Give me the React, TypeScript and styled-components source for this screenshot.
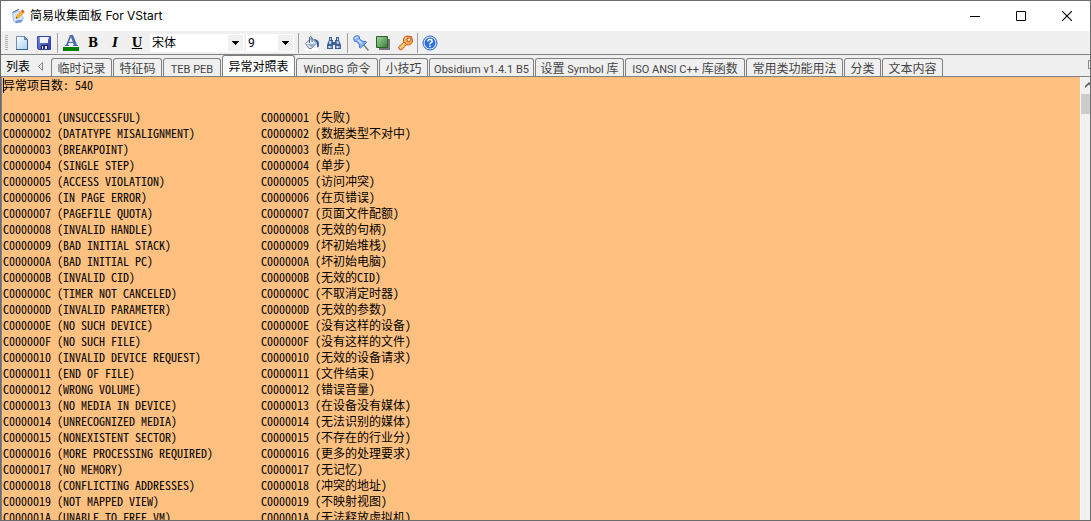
import React from 'react';
import styled, { createGlobalStyle } from 'styled-components';

const GlobalStyle = createGlobalStyle`
  * { box-sizing: border-box; }
  body { margin: 0; }
  button, select, textarea { font: inherit; color: inherit; border-radius: 0; }
`;

const Window = styled.div`
  display: flex;
  flex-direction: column;
  height: 100vh;
  border: 1px solid #6b6b6b;
  background: #f0f0f0;
  color: #000;
  font: 12px/16px Roboto, 'Noto Sans CJK SC', sans-serif;
  overflow: hidden;
`;

const TitleBar = styled.header`
  display: flex;
  align-items: center;
  flex: none;
  height: 30px;
  padding-left: 9px;
  background: #fff;
`;

const Title = styled.h1`
  flex: 1;
  margin: 0;
  padding-left: 4px;
  font: 12px/16px Inter, 'Noto Sans CJK SC', sans-serif;
`;

const CaptionButton = styled.button`
  display: flex;
  align-items: center;
  justify-content: center;
  width: 46px;
  height: 30px;
  padding: 0;
  border: 0;
  background: none;
`;

const Toolbar = styled.div`
  display: flex;
  align-items: center;
  flex: none;
  height: 24px;
  padding-left: 2px;
  border-bottom: 1px solid #808080;
`;

const Grip = styled.span`
  width: 3px;
  height: 16px;
  margin: 0 3px 0 2px;
  background: repeating-linear-gradient(#b0b0b0 0 1px, #f0f0f0 1px 2px);
`;

const ToolButton = styled.button`
  display: flex;
  align-items: center;
  justify-content: center;
  flex: none;
  width: 22px;
  height: 22px;
  padding: 0;
  border: 0;
  background: none;
`;

const Letter = styled(ToolButton)<{ $italic?: boolean; $underline?: boolean }>`
  font: bold 12px/16px 'DejaVu Serif', serif;
  font-style: ${(p) => (p.$italic ? 'italic' : 'normal')};
  text-decoration: ${(p) => (p.$underline ? 'underline' : 'none')};
`;

const Separator = styled.span<{ $margin?: number }>`
  flex: none;
  width: 1px;
  height: 20px;
  margin: 0 ${(p) => p.$margin ?? 2}px;
  background: #a0a0a0;
`;

const Pickers = styled.div`
  display: flex;
  gap: 2px;
  padding: 0 2px;
`;

const Picker = styled.label<{ $width: number }>`
  display: grid;
  grid-template-columns: 1fr 16px;
  align-items: center;
  flex: none;
  width: ${(p) => p.$width}px;
  height: 18px;
  background: #fff;

  select {
    grid-area: 1 / 1 / 2 / 3;
    width: 100%;
    height: 18px;
    padding: 0 0 0 2px;
    border: 0;
    appearance: none;
    background: none;
  }
  svg {
    grid-area: 1 / 2;
    width: 15px;
    height: 16px;
    background: #f0f0f0;
    pointer-events: none;
  }
`;

const TabRow = styled.nav`
  display: flex;
  align-items: flex-end;
  flex: none;
  height: 22px;
  border-bottom: 1px solid #808080;
`;

const ListLabel = styled.button`
  width: 35px;
  height: 19px;
  padding: 0 0 0 5px;
  border: 0;
  background: none;
  text-align: left;
`;

const Scroller = styled.button`
  display: flex;
  align-items: center;
  justify-content: center;
  width: 10px;
  height: 20px;
  margin-right: 5px;
  padding: 0;
  border: 0;
  background: none;
`;

const Tab = styled.button<{ $width: number; $active?: boolean }>`
  flex: none;
  width: ${(p) => p.$width}px;
  height: ${(p) => (p.$active ? 21 : 18)}px;
  margin-right: 1px;
  padding: ${(p) => (p.$active ? 1 : 2)}px 0 0;
  border: 1px solid #808080;
  border-bottom: 0;
  border-radius: 3px 3px 0 0;
  background: ${(p) => (p.$active ? '#fff' : '#f0f0f0')};
  color: ${(p) => (p.$active ? '#000' : '#444')};
  line-height: 16px;
  white-space: nowrap;
`;

const Latin = styled.span`
  font-size: 11px;
`;

const TabEnd = styled.span`
  flex: 1;
  display: flex;
  justify-content: flex-end;
  align-self: flex-start;
  padding-top: 5px;
`;

const Body = styled.main`
  display: flex;
  flex: 1;
  min-height: 0;
  border-left: 1px solid #808080;
  position: relative;
`;

const Editor = styled.textarea`
  flex: 1;
  min-width: 0;
  margin: 0;
  padding: 0 0 0 1px;
  border: 0;
  outline: 0;
  resize: none;
  overflow: hidden;
  white-space: pre;
  background: #ffc080;
  font: 12px/16px 'Noto Sans CJK SC', monospace;
  font-feature-settings: 'hwid' 1;
`;

const Caret = styled.span`
  position: absolute;
  left: 1px;
  top: 1px;
  width: 1px;
  height: 15px;
  background: #000;
`;

const ScrollTrack = styled.div`
  display: flex;
  flex-direction: column;
  width: 10px;
  border-left: 1px solid #fff;
  background: #f0f0f0;
  overflow: hidden;

  svg { flex: none; height: 17px; }
`;

const ScrollThumb = styled.span`
  height: 20px;
  background: #cdcdcd;
`;

const tabs: [string, number][] = [
  ['临时记录', 61],
  ['特征码', 49],
  ['TEB PEB', 58],
  ['异常对照表', 73],
  ['WinDBG 命令', 82],
  ['小技巧', 49],
  ['Obsidium v1.4.1 B5', 105],
  ['设置 Symbol 库', 89],
  ['ISO ANSI C++ 库函数', 120],
  ['常用类功能用法', 97],
  ['分类', 37],
  ['文本内容', 61],
];

const codes: [string, string, string][] = [
  ['C0000001', 'UNSUCCESSFUL', '失败'],
  ['C0000002', 'DATATYPE MISALIGNMENT', '数据类型不对中'],
  ['C0000003', 'BREAKPOINT', '断点'],
  ['C0000004', 'SINGLE STEP', '单步'],
  ['C0000005', 'ACCESS VIOLATION', '访问冲突'],
  ['C0000006', 'IN PAGE ERROR', '在页错误'],
  ['C0000007', 'PAGEFILE QUOTA', '页面文件配额'],
  ['C0000008', 'INVALID HANDLE', '无效的句柄'],
  ['C0000009', 'BAD INITIAL STACK', '坏初始堆栈'],
  ['C000000A', 'BAD INITIAL PC', '坏初始电脑'],
  ['C000000B', 'INVALID CID', '无效的CID'],
  ['C000000C', 'TIMER NOT CANCELED', '不取消定时器'],
  ['C000000D', 'INVALID PARAMETER', '无效的参数'],
  ['C000000E', 'NO SUCH DEVICE', '没有这样的设备'],
  ['C000000F', 'NO SUCH FILE', '没有这样的文件'],
  ['C0000010', 'INVALID DEVICE REQUEST', '无效的设备请求'],
  ['C0000011', 'END OF FILE', '文件结束'],
  ['C0000012', 'WRONG VOLUME', '错误音量'],
  ['C0000013', 'NO MEDIA IN DEVICE', '在设备没有媒体'],
  ['C0000014', 'UNRECOGNIZED MEDIA', '无法识别的媒体'],
  ['C0000015', 'NONEXISTENT SECTOR', '不存在的行业分'],
  ['C0000016', 'MORE PROCESSING REQUIRED', '更多的处理要求'],
  ['C0000017', 'NO MEMORY', '无记忆'],
  ['C0000018', 'CONFLICTING ADDRESSES', '冲突的地址'],
  ['C0000019', 'NOT MAPPED VIEW', '不映射视图'],
  ['C000001A', 'UNABLE TO FREE VM', '无法释放虚拟机'],
];

const text =
  '异常项目数: 540\n\n' +
  codes.map(([code, name, zh]) => `${code} (${name})`.padEnd(43) + `${code} (${zh})`).join('\n');

const TabLabel = ({ label }: { label: string }) => (
  <>
    {label.split(/([ -~]+)/).map((part, i) => (i % 2 ? <Latin key={i}>{part}</Latin> : part))}
  </>
);

const Icon = ({ children, size = 16 }: { children: React.ReactNode; size?: number }) => (
  <svg width={size} height={size} viewBox="0 0 16 16" aria-hidden="true">
    {children}
  </svg>
);

const Arrow = () => (
  <svg viewBox="0 0 15 16" aria-hidden="true">
    <path d="M4 6h7v1h-1v1H9v1H8v1H7V9H6V8H5V7H4z" fill="#000" />
  </svg>
);

const NotepadIcon = () => (
  <Icon>
    <path d="M2.500 5 9 3l4.500 7-2 4-5.500 1-2.500-2z" fill="#d5e6fb" stroke="#a5c0ee" />
    <path d="M5 13 12 11.500l-.5 2.500-5 1z" fill="#6f8fe0" />
    <path d="M2.500 5 4 3l1 1 1-2 1 1 1-2 1 1" fill="none" stroke="#5478c8" />
    <path d="m6 10.500 1-3 5-5 2 2-5 5z" fill="#ffb52c" stroke="#e58a19" strokeWidth=".7" />
    <path d="m11 3 1.500-1.500 2 2L13 5z" fill="#e2503c" />
    <path d="m6 10.500.6-1.600 1 1z" fill="#333" />
  </Icon>
);

const NewIcon = () => (
  <Icon>
    <defs>
      <linearGradient id="page" x1="0" y1="0" x2="1" y2="1">
        <stop offset="0" stopColor="#fff" />
        <stop offset="1" stopColor="#a9cff8" />
      </linearGradient>
    </defs>
    <path d="M2.500 1.500h8l3 3v10h-11z" fill="url(#page)" stroke="#6f8fbd" />
    <path d="M2 14.500h12M13.500 5v10" stroke="#3d5f96" />
    <path d="M10.500 1.500v3h3z" fill="#6fa4e8" stroke="#5b80b8" />
  </Icon>
);

const SaveIcon = () => (
  <Icon>
    <defs>
      <linearGradient id="disk" x1="0" y1="0" x2="1" y2="1">
        <stop offset="0" stopColor="#7e95f0" />
        <stop offset="1" stopColor="#2637a0" />
      </linearGradient>
    </defs>
    <path d="M1.500 1.500h13v13h-12l-1-1z" fill="url(#disk)" stroke="#3444a4" />
    <path d="M4 2h8v6H4z" fill="#f2f5ff" />
    <path d="M12 2h1v2h-1z" fill="#c5d0ff" />
    <path d="M5 10h7v4H5z" fill="#1b2454" />
    <path d="M6 11h5v3H6z" fill="#dfe3ee" />
    <path d="M7 11h2v3H7z" fill="#27306b" />
  </Icon>
);

const ColorIcon = () => (
  <Icon>
    <path d="M7 0h3l4 10h1v1h-5v-1h1L10 8H5.500L5 10h1v1H2v-1h1zM8 2 6 7h3.800z" fill="#4a6ab0" fillRule="evenodd" />
    <path d="M0 12h16v4H0z" fill="#008000" />
  </Icon>
);

const BucketIcon = () => (
  <Icon>
    <path d="M1 13h13v3H1z" fill="#fff" />
    <path d="m1.500 8.500 6-5.500 5 5-5 5.500H5z" fill="#e9eff8" stroke="#6a7c98" />
    <path d="m3 9 5 4 4-4.500z" fill="#9aaed0" />
    <path d="M5.500 8V2.500q1-2 2.500 0V7" fill="none" stroke="#44577c" />
    <path d="M9 4q6 0 6 5 0 4-2 3V8q-1-2-4-4z" fill="#315eae" />
  </Icon>
);

const BinocularsIcon = () => (
  <Icon>
    <path d="M3 2h3v3h1v2h2V5h1V2h3v3l2 5v4H9v-4H7v4H1v-4l2-5z" fill="#3e5f91" />
    <path d="M4 3h1v2H4zM11 3h1v2h-1zM3.500 6h2l-.5 3H3zM10.500 6h2l.5 3h-2z" fill="#bcd2ee" />
    <path d="M2 11h4v2H2zM10 11h4v2h-4z" fill="#87a9d7" />
    <path d="M3 11h1v2H3zM11 11h1v2h-1z" fill="#eef5ff" />
  </Icon>
);

const PinIcon = () => (
  <Icon>
    <path d="m10 9 5.500 6.500" stroke="#6f7c91" strokeWidth="1.500" />
    <path d="M.5 3.500Q1 .5 5 .5l1.500 1.500v2L10 6.500h3l.5 1-6 5.500-1-.5V10L3.500 6.500H1.500z" fill="#82adf7" stroke="#4a78d8" />
    <path d="M2 3.500 4.500 2M5 5l4 3.500" stroke="#d4e4ff" strokeWidth="1.500" />
  </Icon>
);

const SquareIcon = () => (
  <Icon>
    <defs>
      <linearGradient id="green" x1="0" y1="0" x2="1" y2="1">
        <stop offset="0" stopColor="#a5d6a0" />
        <stop offset="1" stopColor="#358036" />
      </linearGradient>
    </defs>
    <path d="M4 4h11v11H4z" fill="#74757c" />
    <path d="M1.500 1.500h11v11h-11z" fill="url(#green)" stroke="#2b602c" />
  </Icon>
);

const WrenchIcon = () => (
  <Icon>
    <path d="m1.500 12 5.500-5 2.500 2.500-5 5.500q-2.500.5-3-3z" fill="#ffbd54" stroke="#c85824" />
    <path d="M6.500 6.500Q6 1.500 10 1l4.500.5 1 4.500q-.5 4-5.500 4z" fill="#ffb34a" stroke="#d2511f" />
    <path d="m10 4 3-1.500L14 4l-1.500 3-2-.5z" fill="#f0f0f0" stroke="#d2511f" />
    <path d="m3 13 5-5M8 4 10 2" stroke="#ffe9b0" />
  </Icon>
);

const HelpIcon = () => (
  <Icon>
    <circle cx="8" cy="8" r="7" fill="#eaf3ff" stroke="#2860b8" />
    <circle cx="8" cy="8" r="5.500" fill="#2e72df" />
    <path d="M5.800 6.500Q6 4.500 8 4.500t2.200 1.800Q10 7.500 8 8.500v1" fill="none" stroke="#fff" strokeWidth="1.500" />
    <path d="M7.200 10.500h1.600V12H7.200z" fill="#fff" />
  </Icon>
);

export default function App() {
  return (
    <>
      <GlobalStyle />
      <Window>
        <TitleBar>
          <NotepadIcon />
          <Title>简易收集面板 For VStart</Title>
          <CaptionButton aria-label="最小化">
            <svg width="10" height="10"><path d="M0 5.500h10" stroke="#000" /></svg>
          </CaptionButton>
          <CaptionButton aria-label="最大化">
            <svg width="10" height="10"><path d="M.5.5h9v9h-9z" fill="none" stroke="#000" /></svg>
          </CaptionButton>
          <CaptionButton aria-label="关闭">
            <svg width="10" height="10"><path d="m0 0 10 10M10 0 0 10" stroke="#000" strokeWidth="1.100" /></svg>
          </CaptionButton>
        </TitleBar>

        <Toolbar role="toolbar">
          <Grip />
          <ToolButton aria-label="新建"><NewIcon /></ToolButton>
          <ToolButton aria-label="保存"><SaveIcon /></ToolButton>
          <Separator />
          <ToolButton aria-label="颜色"><ColorIcon /></ToolButton>
          <Letter>B</Letter>
          <Letter $italic>I</Letter>
          <Letter $underline>U</Letter>
          <Pickers>
            <Picker $width={94}>
              <select aria-label="字体" defaultValue="宋体"><option>宋体</option></select>
              <Arrow />
            </Picker>
            <Picker $width={48}>
              <select aria-label="字号" defaultValue="9"><option>9</option></select>
              <Arrow />
            </Picker>
          </Pickers>
          <Separator />
          <ToolButton aria-label="填充"><BucketIcon /></ToolButton>
          <ToolButton aria-label="查找"><BinocularsIcon /></ToolButton>
          <Separator />
          <ToolButton aria-label="固定"><PinIcon /></ToolButton>
          <ToolButton aria-label="背景"><SquareIcon /></ToolButton>
          <ToolButton aria-label="设置"><WrenchIcon /></ToolButton>
          <Separator $margin={1} />
          <ToolButton aria-label="帮助"><HelpIcon /></ToolButton>
        </Toolbar>

        <TabRow>
          <ListLabel>列表</ListLabel>
          <Scroller aria-label="向左">
            <svg width="6" height="9"><path d="M4.500.5v8L.5 4.500z" fill="none" stroke="#888" /></svg>
          </Scroller>
          {tabs.map(([label, width], i) => (
            <Tab key={label} $width={width} $active={i === 3}><TabLabel label={label} /></Tab>
          ))}
          <TabEnd>
            <svg width="2" height="9"><path d="M.5 0v9M0 .5h2M0 8.500h2" stroke="#888" /></svg>
          </TabEnd>
        </TabRow>

        <Body>
          <Editor aria-label="内容" defaultValue={text} spellCheck={false} />
          <Caret />
          <ScrollTrack>
            <svg width="9" viewBox="0 0 9 17" aria-hidden="true">
              <path d="M4 11V9l4-4 4 4v2L8 7.500z" fill="#606060" />
            </svg>
            <ScrollThumb />
          </ScrollTrack>
        </Body>
      </Window>
    </>
  );
}
